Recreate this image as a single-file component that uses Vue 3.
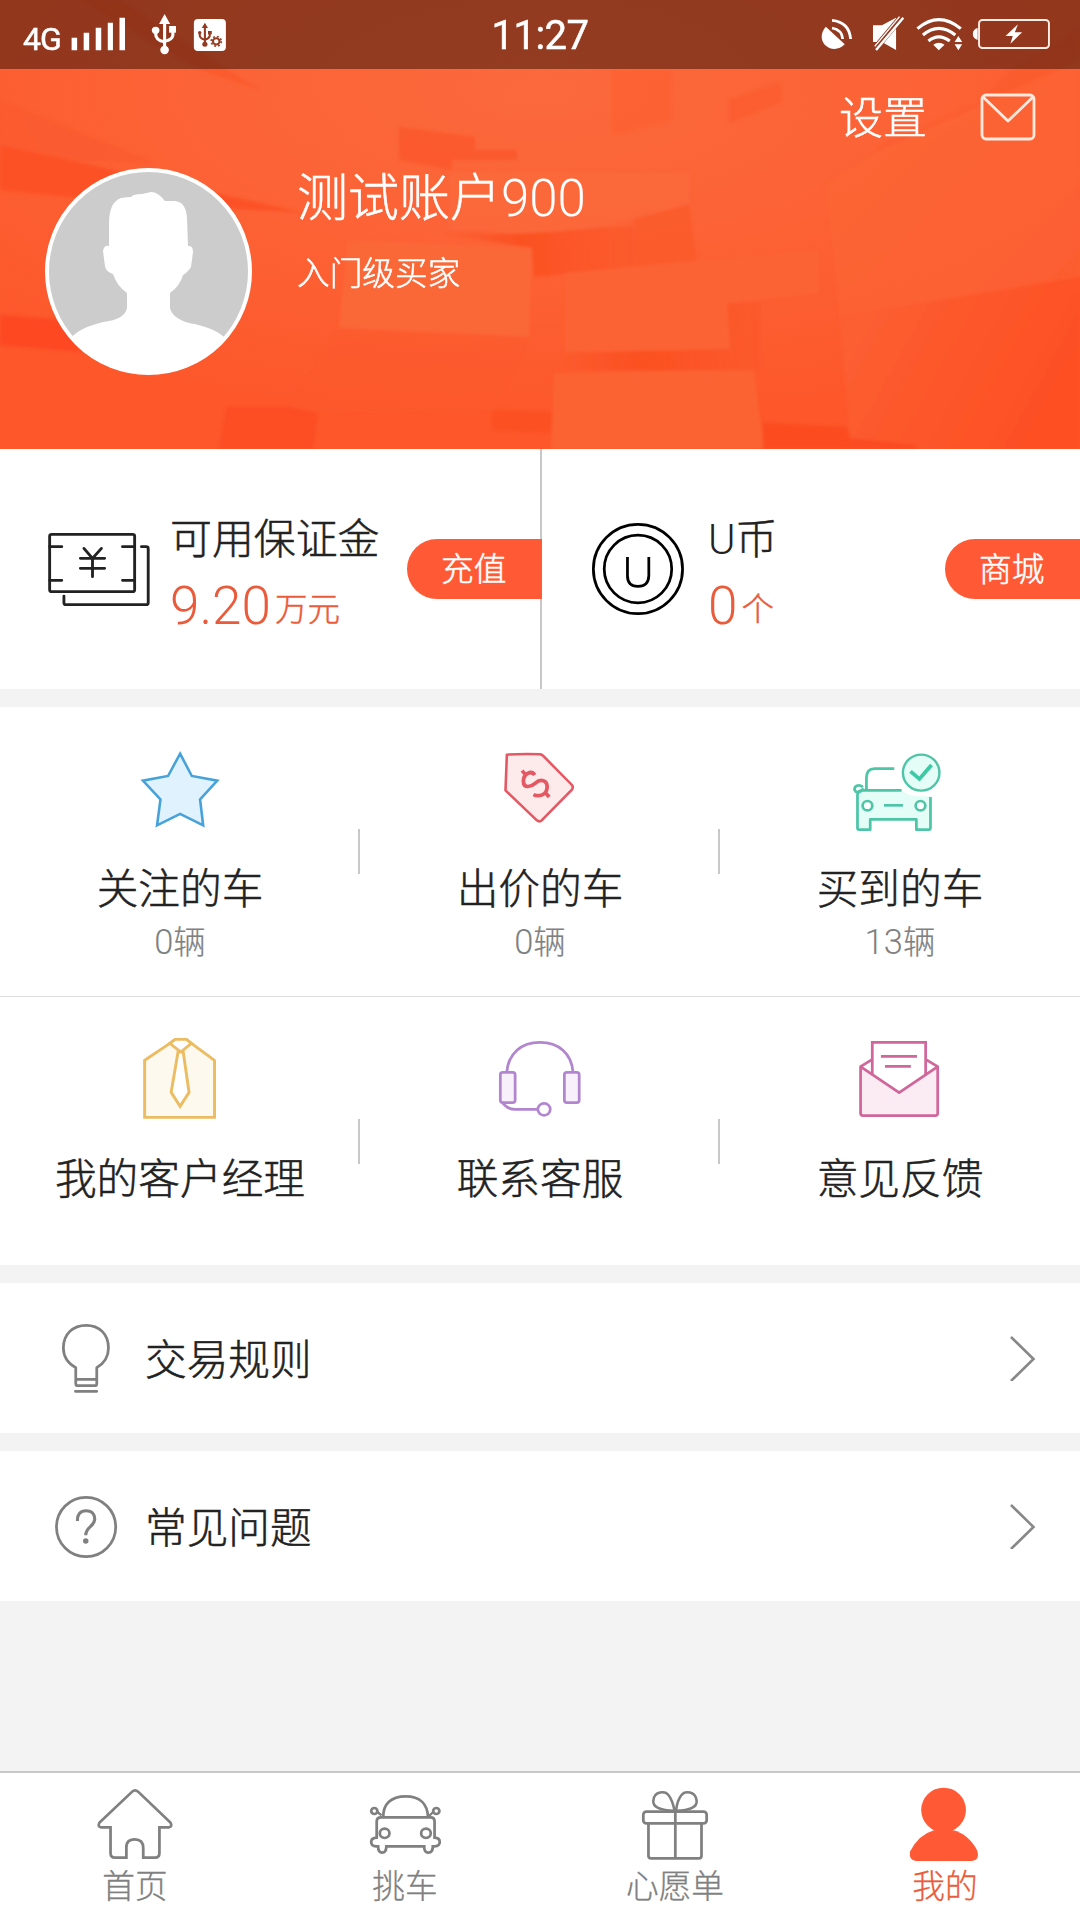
<script setup>
const rules = [
  { id: 'rules', label: '交易规则' },
  { id: 'faq', label: '常见问题' },
]
</script>

<template>
  <div class="page">
    <header class="hero">
      <svg class="hero-bg" viewBox="0 0 1080 449" preserveAspectRatio="none">
        <defs>
          <radialGradient id="glow" cx="0.5" cy="0.2" r="0.75">
            <stop offset="0" stop-color="#fb693c" />
            <stop offset="0.5" stop-color="#fc6235" />
            <stop offset="1" stop-color="#fd572a" />
          </radialGradient>
          <linearGradient id="rt" x1="0" y1="0" x2="1" y2="1">
            <stop offset="0" stop-color="#fc6838" />
            <stop offset="1" stop-color="#fc5e30" />
          </linearGradient>
          <linearGradient id="lo" x1="0" y1="0" x2="1" y2="0.4">
            <stop offset="0" stop-color="#fc6133" />
            <stop offset="1" stop-color="#fd4f24" />
          </linearGradient>
          <linearGradient id="dk" x1="0" y1="0" x2="1" y2="0">
            <stop offset="0" stop-color="#fb4f20" stop-opacity="0" />
            <stop offset="0.4" stop-color="#fb4f20" stop-opacity="0.9" />
            <stop offset="1" stop-color="#fb5829" stop-opacity="0.7" />
          </linearGradient>
          <filter id="soft"><feGaussianBlur stdDeviation="1.6" /></filter>
        </defs>
        <rect width="1080" height="449" fill="url(#glow)" />
        <g filter="url(#soft)">
          <path d="M0 100 155 163 70 160 0 145Z" fill="#fb5a2c" opacity=".7" />
          <path d="M0 145 60 158 180 185 300 212 150 205 0 190Z" fill="#fc4d22" opacity=".75" />
          <path d="M80 0H120L260 90 200 70Z" fill="#fb5226" opacity=".5" />
          <path d="M0 315 69 320 80 352 0 345Z" fill="#fd4520" opacity=".8" />
          <path d="M399 127 475 137V150H517V160H452V170L399 160Z" fill="#fb5527" opacity=".7" />
          <path d="M612 70H672V120L612 135Z" fill="#fc5b2c" opacity=".45" />
          <path d="M729 100 781 82V102L729 123Z" fill="#fb5527" opacity=".5" />
          <path d="M877 147 977 103 1010 70 1080 30V60L980 118 880 152Z" fill="#fb5728" opacity=".4" />
          <path d="M826 185 880 150 1080 60V277L840 317Z" fill="url(#rt)" opacity=".8" />
          <path d="M840 317 1080 277V449H850Z" fill="url(#lo)" />
          <path d="M440 233 517 234 634 226 637 267 534 277 532 248Z" fill="url(#dk)" />
          <path d="M634 218 689 205 697 260 637 267Z" fill="#fb5829" opacity=".75" />
          <path d="M448 172H690V203Q600 234 517 233L448 229Z" fill="#fb693b" opacity=".6" />
          <path d="M348 240 532 248 529 337 339 328Z" fill="#fb6838" />
          <path d="M339 328 529 337 492 410 290 413Z" fill="#fc5a2b" opacity=".3" />
          <path d="M565 273 819 250V293L727 303 730 349 565 352Z" fill="#fb6434" />
          <path d="M560 353 730 349 727 303H761V370H560Z" fill="url(#dk)" />
          <path d="M554 373 754 370 764 449H551Z" fill="#fb6333" />
          <path d="M492 410 553 412 551 433 492 430Z" fill="#fb4f22" opacity=".8" />
          <path d="M227 407H289L317 413 313 449H219Z" fill="#fb4a20" opacity=".75" />
          <path d="M763 423 847 427 850 438 916 445V449H763Z" fill="#fb4a20" opacity=".9" />
        </g>
      </svg>

      <div class="status">
        <div class="status-left">
          <span class="net">4G</span>
          <svg width="160" height="69" viewBox="197.5 0 464.6 207" preserveAspectRatio="none">
            <path fill="#fff" d="M208 113h16v38h-16zM243 98h16v53h-16zM278 83h16v68h-16zM313 68h15v83h-15zM347 53h16v98h-16z" />
            <g fill="#fff">
              <path d="M478 42 494 72H462Z" /><circle cx="478" cy="150" r="12.5" />
              <circle cx="452" cy="91" r="11" /><path d="M491 78h20v20h-20z" />
              <path d="M478 70V150M452 91V101Q452 122 478 125M502 95V106Q500 120 478 124" fill="none" stroke="#fff" stroke-width="9" />
            </g>
            <rect x="563" y="57" width="93" height="96" rx="12" fill="#fff" />
            <g fill="#933b22">
              <path d="M595 68 604 84H586Z" /><circle cx="595" cy="133" r="7.500" />
              <circle cx="580" cy="98" r="5" /><path d="M604 93h11v10h-11z" />
              <path d="M595 80V133M580 98V106Q581 116 595 119M609 100V108Q607 116 595 119" fill="none" stroke="#933b22" stroke-width="6" />
            </g>
            <circle cx="628" cy="124" r="9.500" fill="none" stroke="#933b22" stroke-width="6" />
            <circle cx="628" cy="124" r="14.500" fill="none" stroke="#933b22" stroke-width="5" stroke-dasharray="5.500 5.890" />
          </svg>
        </div>
        <span class="clock">11:27</span>
        <svg class="status-right" width="245" height="69" viewBox="798.600 0 711.500 207" preserveAspectRatio="none">
          <path fill="#fff" d="M830 80C815 98 814 118 827 134C843 151 868 151 885 133Z" />
          <path d="M848 61Q898 66 902 117M848 84Q878 90 879 117" fill="none" stroke="#fff" stroke-width="8" />
          <path fill="#fff" d="M967 76H993L1034 53V150L993 126H967Z" />
          <path d="M1054 46 968 152" stroke="#933b22" stroke-width="19" />
          <path d="M1055 53 976 150" stroke="#fff" stroke-width="7" />
          <path d="M1044 50 972 139" stroke="#fff" stroke-width="4" />
          <g fill="none" stroke="#fff" stroke-width="9">
            <path d="M1096 86Q1158 32 1222 86M1112 105Q1158 65 1206 105M1128 123Q1158 98 1190 123" />
          </g>
          <path fill="#fff" d="M1142 134Q1158 122 1175 134L1158 151ZM1215 108 1226 126H1204ZM1204 133H1226L1215 151ZM1271 84Q1257 88 1257 102T1271 120Z" />
          <rect x="1275" y="60" width="203" height="84" rx="10" fill="none" stroke="#ffeee6" stroke-width="5.500" />
          <path fill="#fff" d="M1388 73 1352 108H1373L1366 131 1400 97H1379Z" />
        </svg>
      </div>

      <div class="toolbar">
        <span class="settings">设置</span>
        <svg width="56" height="48" viewBox="0 0 56 48" fill="none" stroke="#ffe9df" stroke-width="2.800">
          <rect x="2" y="2" width="52" height="44" rx="4" />
          <path d="M3 4 28 28 53 4" stroke-linejoin="round" />
        </svg>
      </div>

      <div class="profile">
        <svg class="avatar" width="207" height="207" viewBox="0 0 207 207">
          <defs><clipPath id="face"><circle cx="103.500" cy="103.500" r="102" /></clipPath></defs>
          <circle cx="103.500" cy="103.500" r="101.500" fill="#ccc" />
          <path clip-path="url(#face)" fill="#fff" d="M64 78V56Q64 34 76 30Q82 29 86 29Q88 26 97 26L106 24Q113 24 120 33H130Q141 34 142 50L143 78Q148 77 148 84L146 99Q142 105 138 107Q135 118 125 125V140Q127 150 144 155Q172 160 182 172L190 207H18L26 170Q36 158 64 153Q80 150 82 140V125Q72 118 68 106Q61 104 60 98L58 83Q59 77 64 78Z" />
          <circle cx="103.500" cy="103.500" r="101.500" fill="none" stroke="#fff" stroke-width="4" />
        </svg>
        <div class="who">
          <div class="name">测试账户<span class="num">900</span></div>
          <div class="level">入门级买家</div>
        </div>
      </div>
    </header>

    <section class="account">
      <div class="wallet deposit">
        <svg width="110" height="80" viewBox="128.800 234 308 240" preserveAspectRatio="none" fill="none" stroke="#222" stroke-width="8" stroke-linecap="round" stroke-linejoin="round">
          <rect x="139" y="250" width="238" height="172" rx="6" />
          <path d="M139 287H173M139 388H173M343 287H377M343 388H377" />
          <path d="M396 287H409Q415 287 415 293V455Q415 461 409 461H185Q179 461 179 455V435" />
          <path d="M235 292 259 322 284 292M259 322V377M225 322H293M225 352H293" />
        </svg>
        <div class="sum">
          <div class="sum-label">可用保证金</div>
          <div class="sum-value"><span class="num">9.20</span><small>万元</small></div>
        </div>
        <span class="pill">充值</span>
      </div>
      <div class="wallet coins">
        <svg width="100" height="100" viewBox="139.400 207 290.400 300" preserveAspectRatio="none" fill="none" stroke="#000" stroke-width="8">
          <ellipse cx="284.500" cy="357" rx="129.500" ry="134" />
          <ellipse cx="284.500" cy="357" rx="98" ry="101.500" />
          <path d="M254 321V377Q254 409 284.500 409T316 377V321" />
        </svg>
        <div class="sum">
          <div class="sum-label"><span class="num">U</span>币</div>
          <div class="sum-value"><span class="num">0</span><small>个</small></div>
        </div>
        <span class="pill">商城</span>
      </div>
    </section>

    <section class="grid">
      <div class="cell">
        <svg class="ico" viewBox="377.500 66 290.400 270" preserveAspectRatio="none">
          <path d="M523 101 557 168 631 182 581 238 590 316 523 282 456 316 466 238 415 182 488 168Z" fill="#dff2fd" stroke="#46a2d9" stroke-width="7.500" />
        </svg>
        <div class="label">关注的车</div>
        <div class="count"><span class="num">0</span>辆</div>
      </div>
      <div class="cell">
        <svg class="ico" viewBox="1423 66 290.400 270" preserveAspectRatio="none" stroke="#e45863" stroke-linejoin="round">
          <path d="M1472 104Q1520 101 1569 103Q1573 104 1577 107L1661 195Q1666 202 1661 209L1573 301Q1567 307 1559 301L1468 211Z" fill="#fdeaea" stroke-width="7.500" />
          <path d="M1553 165C1543 150 1520 160 1520 184C1521 207 1543 200 1554 190C1570 175 1589 180 1589 201C1588 226 1565 231 1549 224M1516 152 1528 166M1582 216 1595 231" fill="none" stroke-width="11" />
        </svg>
        <div class="label">出价的车</div>
        <div class="count"><span class="num">0</span>辆</div>
      </div>
      <div class="cell">
        <svg class="ico" viewBox="900.300 66 290.400 270" preserveAspectRatio="none" fill="none" stroke="#4fc5a8" stroke-width="8" stroke-linejoin="round">
          <path d="M922 222Q922 211 933 211H1050Q1072 230 1106 229H1134V324Q1134 329 1129 329H1093V298H959V329H927Q922 329 922 324Z" fill="#e4fdf7" stroke="none" />
          <path d="M1134 231V324Q1134 329 1129 329H1093V298H959V329H927Q922 329 922 324V226Q922 211 937 211H1050M1029 146H972Q948 147 948 173V211" />
          <path d="M938 201Q925 191 915 201Q910 212 921 217Q931 218 939 205" />
          <circle cx="951" cy="257" r="14" fill="#fff" /><circle cx="1105" cy="257" r="14" fill="#fff" />
          <path d="M999 256H1054" />
          <ellipse cx="1107" cy="158" rx="53" ry="54" fill="#e4fdf7" stroke-width="7" />
          <path d="M1076 154 1102 177 1137 135" stroke="#3cc9a4" stroke-width="11" stroke-linejoin="miter" />
        </svg>
        <div class="label">买到的车</div>
        <div class="count"><span class="num">13</span>辆</div>
      </div>
    </section>

    <section class="grid second">
      <div class="cell">
        <svg class="ico" viewBox="377.500 126 290.400 270" preserveAspectRatio="none" stroke="#ecbc62" stroke-width="8.500">
          <path d="M420 382V211L493 160 509 148H541L556 160 623 211V382Z" fill="#fdf9ee" />
          <path d="M493 160 509 148H541L556 160 525 186Z" fill="#fff" />
          <path d="M517 186H532L549 307 523 349 497 307Z" fill="#fff" />
        </svg>
        <div class="label">我的客户经理</div>
      </div>
      <div class="cell">
        <svg class="ico" viewBox="1423 126 290.400 270" preserveAspectRatio="none" fill="none" stroke="#b286cf" stroke-width="8">
          <path d="M1472 246C1476 190 1514 157 1568 157S1660 190 1664 246" />
          <rect x="1453" y="247" width="43" height="91" rx="7" fill="#f8f1fc" />
          <rect x="1639" y="247" width="43" height="91" rx="7" fill="#f8f1fc" />
          <path d="M1458 336Q1472 358 1496 358H1562" /><circle cx="1580" cy="358" r="18" />
        </svg>
        <div class="label">联系客服</div>
      </div>
      <div class="cell">
        <svg class="ico" viewBox="900.300 126 290.400 270" preserveAspectRatio="none" fill="none" stroke="#d0669a" stroke-width="8">
          <path d="M931 230 1043 308 1155 230V370Q1155 377 1148 377H938Q931 377 931 370Z" fill="#fbecf4" stroke-linejoin="round" />
          <path d="M965 253V157H1120V253M965 208 931 230M1120 208 1155 230M990 199H1095M1002 229H1077" />
        </svg>
        <div class="label">意见反馈</div>
      </div>
    </section>

    <section v-for="r in rules" :key="r.id" class="row">
      <svg v-if="r.id === 'rules'" width="80" height="80" viewBox="133.600 84 232.300 240" preserveAspectRatio="none" fill="none" stroke="#808080" stroke-width="8" stroke-linecap="round" stroke-linejoin="round">
        <path d="M220 233Q184 212 184 174C184 132 212 106 250 106S315 132 315 174Q315 212 281 233V281Q281 287 275 287H226Q220 287 220 281ZM220 268H281M219 304H281" />
      </svg>
      <svg v-else width="80" height="80" viewBox="133.600 588 232.300 240" preserveAspectRatio="none" fill="none" stroke="#808080" stroke-width="8">
        <ellipse cx="250" cy="711" rx="86" ry="89" />
        <path d="M225 693C224 672 234 662 250 662S276 672 275 689C273 711 249 710 249 736" stroke-width="9" />
        <circle cx="249" cy="753" r="8" fill="#808080" stroke="none" />
      </svg>
      <span class="row-label">{{ r.label }}</span>
      <svg class="chev" width="28" height="46" viewBox="0 0 28 46" fill="none" stroke="#888" stroke-width="2.600">
        <path d="M3 2 25.500 24 3 46" />
      </svg>
    </section>

    <nav class="tabs">
      <div class="tab">
        <svg class="tab-ico" viewBox="275.900 69 232.300 240" preserveAspectRatio="none" fill="none" stroke="#808080" stroke-width="8">
          <path d="M384 95Q392 87 401 95L495 188Q502 200 490 202H463V279Q463 293 450 293H416V264Q416 238 391 238T367 264V293H334Q321 293 321 279V202H294Q282 200 289 188Z" />
        </svg>
        <span>首页</span>
      </div>
      <div class="tab">
        <svg class="tab-ico" viewBox="1060 69 232.300 240" preserveAspectRatio="none" fill="none" stroke="#808080" stroke-width="8">
          <path d="M1113 172C1112 132 1136 109 1178 109S1242 132 1243 172M1107 172H1250Q1262 172 1262 184V233Q1277 234 1277 246T1262 259H1257Q1257 278 1244 278T1232 259H1122Q1122 278 1110 278T1098 259H1092Q1078 258 1078 246T1094 233V184Q1094 172 1107 172Z" />
          <circle cx="1117" cy="220" r="14" /><circle cx="1237" cy="220" r="14" />
          <circle cx="1087" cy="153" r="9" /><circle cx="1267" cy="153" r="9" />
          <path d="M1096 156 1108 166M1258 156 1246 168" stroke-width="7" />
        </svg>
        <span>挑车</span>
      </div>
      <div class="tab">
        <svg class="tab-ico" viewBox="275.900 69 232.300 240" preserveAspectRatio="none" fill="none" stroke="#808080" stroke-width="8">
          <rect x="300" y="155" width="184" height="35" rx="9" />
          <path d="M315 192V288Q315 295 323 295H461Q469 295 469 288V192M393 152V295" />
          <path d="M391 152C346 152 328 140 329 123C330 92 364 92 373 105C382 116 387 134 391 152ZM395 152C438 152 456 140 455 123C453 92 420 92 411 105C402 116 397 134 395 152Z" stroke-width="7.500" />
        </svg>
        <span>心愿单</span>
      </div>
      <div class="tab active">
        <svg class="tab-ico" viewBox="1060 69 232.300 240" preserveAspectRatio="none" fill="#ff5a35">
          <ellipse cx="1172" cy="150" rx="65" ry="67" />
          <path d="M1144 211H1200Q1244 222 1270 272Q1278 301 1254 303H1092Q1069 300 1075 274Q1100 224 1144 211Z" />
        </svg>
        <span>我的</span>
      </div>
    </nav>
  </div>
</template>

<style>
body { margin: 0; background: #f3f3f3; }
</style>

<style scoped>
.page {
  width: 1080px;
  height: 1920px;
  display: flex;
  flex-direction: column;
  background: #f3f3f3;
  overflow: hidden;
  font-family: "Noto Sans CJK SC", sans-serif;
  font-weight: 300;
  color: #222;
  -webkit-text-stroke: 0.5px currentColor;
}
svg { display: block; flex: none; }
.num { font-family: Roboto, sans-serif; font-weight: 300; line-height: 1; -webkit-text-stroke: 0; }
.hero { position: relative; height: 449px; flex: none; overflow: hidden; color: #fff; }
.hero-bg { position: absolute; inset: 0; width: 1080px; height: 449px; }
.status {
  position: relative;
  height: 69px;
  display: grid;
  grid-template-columns: 1fr auto 1fr;
  background: rgba(0, 0, 0, 0.42);
  font-family: Roboto, sans-serif;
  font-weight: 400;
}
.status-left { display: flex; padding-left: 23px; }
.net { width: 45px; font-size: 32px; line-height: 79px; letter-spacing: -1px; }
.clock { font-size: 40px; line-height: 72px; letter-spacing: -0.5px; }
.status-right { justify-self: end; margin-right: 20px; }
.toolbar {
  position: relative;
  height: 99px;
  box-sizing: border-box;
  padding: 0 44px 4px 0;
  display: flex;
  justify-content: flex-end;
  align-items: center;
  gap: 53px;
}
.settings { font-size: 44px; line-height: 50px; margin-top: -4px; }
.profile { position: relative; display: flex; padding-left: 45px; gap: 45px; }
.name { font-size: 51px; line-height: 60px; margin-top: -4px; }
.level { font-size: 32.700px; line-height: 40px; margin-top: 27px; }
.account { height: 240px; flex: none; display: flex; background: #fff; }
.wallet { display: flex; align-items: center; box-sizing: border-box; }
.deposit { width: 542px; padding-left: 46px; background: linear-gradient(#c8c8c8, #c8c8c8) right / 2px 100% no-repeat; }
.coins { width: 538px; padding-left: 46px; }
.deposit svg, .row > svg:first-child { margin-top: -1px; }
.sum { flex: 1; margin-top: 12px; }
.deposit .sum { padding-left: 14px; }
.coins .sum { padding-left: 20px; }
.sum-label { font-size: 41.900px; line-height: 50px; }
.sum-value { font-size: 53px; line-height: 60px; margin-top: 10px; color: #ea5b3b; white-space: nowrap; }
.sum-value small { font-size: 32.500px; margin-left: 4px; position: relative; top: -3px; }
.pill {
  width: 135px;
  height: 60px;
  box-sizing: border-box;
  padding-left: 34px;
  border-radius: 30px 0 0 30px;
  background: #ff5a35;
  color: #fff;
  font-size: 32.700px;
  line-height: 55px;
}
.grid { display: grid; grid-template-columns: repeat(3, 1fr); margin-top: 18px; height: 289px; flex: none; background: #fff; }
.grid.second { margin-top: 0; height: 269px; box-sizing: border-box; border-top: 1px solid #ddd; }
.cell {
  display: flex;
  flex-direction: column;
  align-items: center;
  padding-top: 35px;
  background: linear-gradient(#c8c8c8, #c8c8c8) right 0 top 122px / 2px 45px no-repeat;
}
.cell:last-child { background: none; }
.ico { width: 100px; height: 90px; }
.label { font-size: 41.700px; line-height: 50px; margin-top: 29px; }
.count { font-size: 32.500px; line-height: 36px; margin-top: 11px; color: #808080; -webkit-text-stroke-width: 0.2px; }
.count .num { font-size: 34.500px; }
.row { height: 150px; flex: none; margin-top: 18px; padding: 0 44px 0 46px; display: flex; align-items: center; background: #fff; }
.row-label { flex: 1; padding-left: 19px; font-size: 41.700px; line-height: 50px; margin-top: -2px; }
.tabs {
  margin-top: auto;
  height: 149px;
  box-sizing: border-box;
  border-top: 2px solid #c8c8c8;
  flex: none;
  display: grid;
  grid-template-columns: repeat(4, 1fr);
  background: #fff;
}
.tab { display: flex; flex-direction: column; align-items: center; padding-top: 10px; font-size: 32.700px; line-height: 36px; color: #808080; -webkit-text-stroke-width: 0.3px; }
.tab-ico { width: 80px; height: 80px; margin-bottom: 3px; }
.active { color: #ea5b3b; }
</style>
